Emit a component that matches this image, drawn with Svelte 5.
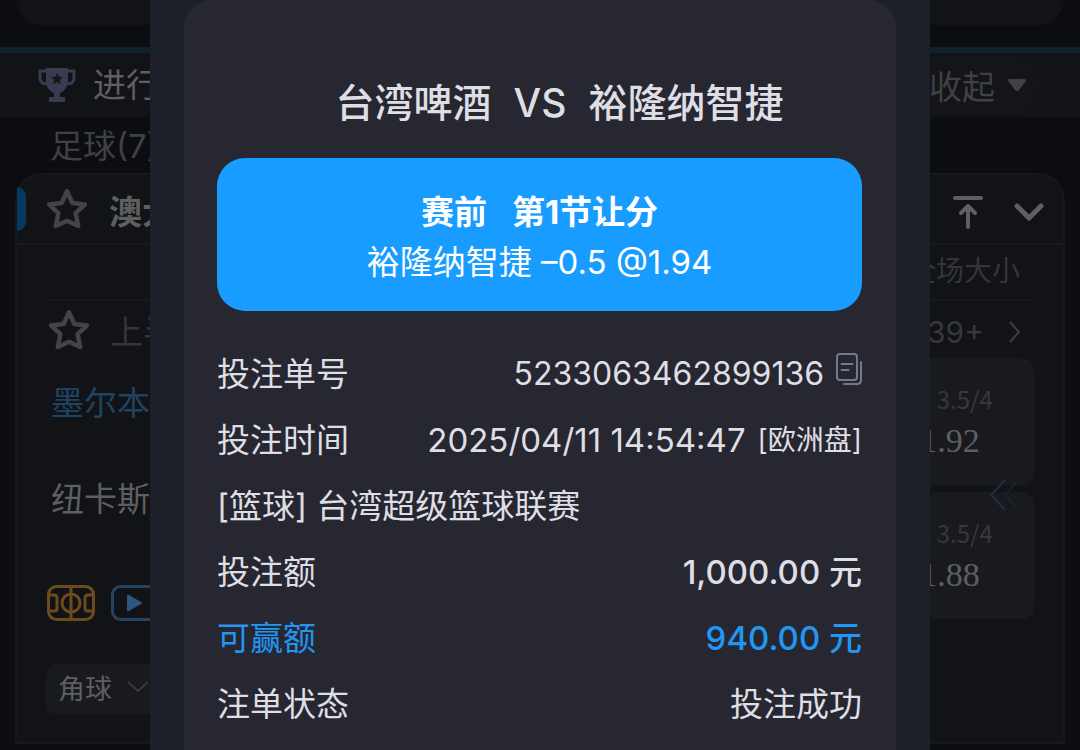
<script>
	const bet = {
		home: '台湾啤酒',
		away: '裕隆纳智捷',
		stage: '赛前',
		market: '第1节让分',
		pick: '裕隆纳智捷 –0.5 @1.94'
	}

	const teams = ['墨尔本', '纽卡斯']

	const odds = [
		{ line: '大 3.5/4', price: '1.92' },
		{ line: '小 3.5/4', price: '1.88' }
	]

	const orderId = '5233063462899136'
	const copy = () => navigator.clipboard?.writeText(orderId)
</script>

{#snippet star()}
	<svg class="star" viewBox="2 2 36 36" aria-hidden="true">
		<path d="M20 4l4.800 10.600 11.400 1.300-8.500 7.800 2.400 11.600L20 30.600 9.900 35.300l2.400-11.600-8.500-7.800 11.400-1.300z" />
	</svg>
{/snippet}

<div class="page">
	<div class="topbar"><div class="topbar-inner"></div></div>

	<header class="section">
		<svg class="trophy" viewBox="0 0 38 38" aria-hidden="true">
			<path d="M9 5H2v7c0 4 3 6 8 6M29 5h7v7c0 4-3 6-8 6" fill="none" stroke="#383c50" stroke-width="3" />
			<path d="M8 2h22v13c0 7-5 11-8 12v4h5v5H11v-5h5v-4c-3-1-8-5-8-12z" fill="#383c50" />
			<path d="M19 7l1.700 3.800 4.300.4-3.200 2.800.9 4.200-3.700-2.200-3.700 2.200.9-4.200-3.200-2.800 4.300-.4z" fill="#15171d" />
		</svg>
		<span class="section-name">进行</span>
		<button class="fold">收起
			<svg width="20" height="14" viewBox="0 0 20 14" aria-hidden="true">
				<path d="M3 1h14q3 0 1.500 2.500L12 12q-2 2-4 0L1.500 3.500Q0 1 3 1z" fill="#404143" />
			</svg>
		</button>
	</header>

	<div class="sport">足球(7)</div>

	<section class="league">
		<div class="league-head">
			<span class="marker"></span>
			{@render star()}
			<h2>澳大</h2>
			<div class="tools">
				<button class="icon" aria-label="置顶">
					<svg width="32" height="34" viewBox="0 0 32 34">
						<path d="M3 3h26M16 32V12M9 18l7-7 7 7" />
					</svg>
				</button>
				<button class="icon" aria-label="展开">
					<svg width="32" height="20" viewBox="0 0 32 20">
						<path d="M4 4l12 12L28 4" stroke-width="5" />
					</svg>
				</button>
			</div>
		</div>

		<div class="league-body">
			<div class="columns">全场大小</div>
			<div class="match-head">
				{@render star()}
				<span class="period">上半</span>
				<a class="more" href="#more">39+
					<svg width="14" height="24" viewBox="0 0 14 24" aria-hidden="true">
						<path d="M2 2l9 10-9 10" fill="none" stroke="#3c3d40" stroke-width="2" />
					</svg>
				</a>
			</div>
			<div class="match">
				<div class="teams">
					{#each teams as team, i}
						<div class="team" class:lead={i === 0}>{team}</div>
					{/each}
					<div class="media">
						<svg width="48" height="36" viewBox="0 0 48 36" fill="none" stroke="#6c4b1c" stroke-width="3" aria-hidden="true">
							<rect x="1.500" y="1.500" width="45" height="33" rx="8" />
							<path d="M24 1v34M2 10h5q3 0 3 3v10q0 3-3 3H2M46 10h-5q-3 0-3 3v10q0 3 3 3h5" />
							<circle cx="24" cy="18" r="9" />
						</svg>
						<svg width="48" height="36" viewBox="0 0 48 36" aria-hidden="true">
							<rect x="1.500" y="1.500" width="45" height="33" rx="8" fill="none" stroke="#234360" stroke-width="3" />
							<path d="M16 11q0-2 2-1l12 7q2 1 0 2l-12 7q-2 1-2-1z" fill="#2c5780" />
						</svg>
					</div>
				</div>
				<div class="odds">
					{#each odds as odd}
						<button class="odd">
							<span class="line">{odd.line}</span>
							<span class="price">{odd.price}</span>
						</button>
					{/each}
					<svg class="swipe" width="30" height="32" viewBox="0 0 30 32" fill="none" stroke-width="2" aria-hidden="true">
						<path d="M16 1L2 16l14 15" stroke="#1b2f47" />
						<path d="M27 4L16 16l11 12" stroke="#182230" />
					</svg>
				</div>
			</div>
			<button class="corner">角球
				<svg width="22" height="12" viewBox="0 0 22 12" aria-hidden="true">
					<path d="M1 1l10 9 10-9" fill="none" stroke="#3a3b3e" stroke-width="2" />
				</svg>
			</button>
		</div>
	</section>
</div>

<div class="modal" role="dialog" aria-modal="true" aria-labelledby="bet-title">
	<div class="sheet">
		<h1 id="bet-title"><span>{bet.home}</span><span>VS</span><span>{bet.away}</span></h1>

		<div class="pick">
			<strong><span>{bet.stage}</span><span>{bet.market}</span></strong>
			<p>{bet.pick}</p>
		</div>

		<dl>
			<div class="row">
				<dt>投注单号</dt>
				<dd class="order">
					{orderId}
					<button class="copy" aria-label="复制" on:click={copy}>
						<svg width="26" height="32" viewBox="0 0 26 32" fill="none" stroke="#777989" stroke-width="2" stroke-linecap="round">
							<rect x="1" y="1" width="20" height="26" rx="3" />
							<path d="M5.500 11h11M5.500 17h7M25 9v18q0 4-4 4H8" />
						</svg>
					</button>
				</dd>
			</div>
			<div class="row">
				<dt>投注时间</dt>
				<dd>2025/04/11 14:54:47 <small>[欧洲盘]</small></dd>
			</div>
			<div class="row">
				<dt>[篮球] 台湾超级篮球联赛</dt>
			</div>
			<div class="row">
				<dt>投注额</dt>
				<dd class="amount">1,000.00 元</dd>
			</div>
			<div class="row win">
				<dt>可赢额</dt>
				<dd class="amount">940.00 元</dd>
			</div>
			<div class="row">
				<dt>注单状态</dt>
				<dd>投注成功</dd>
			</div>
		</dl>
	</div>
</div>

<style>
	:global(body) {
		margin: 0;
		background: #0b0d11;
	}

	.page,
	.modal {
		font-family: Inter, 'Noto Sans CJK SC', sans-serif;
	}

	.page *,
	.modal * {
		box-sizing: border-box;
	}

	button {
		margin: 0;
		padding: 0;
		border: 0;
		background: none;
		color: inherit;
		font: inherit;
		cursor: pointer;
	}

	svg {
		flex: none;
	}

	.page {
		height: 100vh;
		overflow: hidden;
		background: #0b0d11;
		color: #5e5f61;
		font-size: 33px;
	}

	.topbar {
		height: 53px;
		padding: 0 16px;
		border-bottom: 6px solid #0f212f;
	}

	.topbar-inner {
		height: 25px;
		border-radius: 0 0 28px 28px;
		background: #111316;
	}

	.section {
		display: flex;
		align-items: center;
		height: 64px;
		padding: 0 40px 0 38px;
		background: #111316;
	}

	.section-name {
		padding-bottom: 4px;
	}

	.trophy {
		width: 38px;
		height: 38px;
		margin-right: 17px;
	}

	.fold {
		display: flex;
		align-items: center;
		gap: 12px;
		height: 58px;
		margin-left: auto;
		padding: 0 13px 0 32px;
		border-radius: 29px;
		background: #131518;
		color: #404144;
	}

	.sport {
		height: 56px;
		padding-left: 50px;
		line-height: 58px;
		color: #404144;
	}

	.league {
		margin: 0 15px;
		border: 2px solid #16181b;
		border-radius: 28px 28px 0 0;
		background: #111316;
	}

	.league-head {
		display: flex;
		align-items: center;
		height: 70px;
		padding-right: 18px;
		border-bottom: 2px solid #17191c;
	}

	.marker {
		width: 9px;
		height: 44px;
		margin-right: 21px;
		border-radius: 0 10px 10px 0;
		background: #07385f;
	}

	.star {
		width: 40px;
		height: 40px;
		fill: none;
		stroke: #434447;
		stroke-width: 4;
		stroke-linejoin: round;
	}

	h2 {
		margin: 0 0 0 22px;
		padding-top: 2px;
		font-size: 33px;
		font-weight: 700;
	}

	.tools {
		display: flex;
		align-items: center;
		gap: 29px;
		margin-left: auto;
		padding-top: 6px;
	}

	.icon {
		display: flex;
	}

	.icon svg {
		fill: none;
		stroke: #5e5f61;
		stroke-width: 4;
		stroke-linecap: round;
		stroke-linejoin: round;
	}

	.league-body {
		padding: 0 29px 28px;
	}

	.columns {
		height: 56px;
		padding-right: 14px;
		border-bottom: 2px solid #17191c;
		font-size: 28px;
		line-height: 52px;
		text-align: right;
		color: #343538;
	}

	.match-head {
		display: flex;
		align-items: center;
		height: 57px;
		padding: 0 12px 0 3px;
	}

	.period {
		margin-left: 21px;
		color: #343538;
	}

	.more {
		display: flex;
		align-items: center;
		gap: 24px;
		margin-left: auto;
		padding-top: 4px;
		color: #37383b;
		font-size: 30px;
		text-decoration: none;
	}

	.match {
		display: flex;
		justify-content: space-between;
	}

	.team {
		height: 96px;
		padding-left: 5px;
		line-height: 90px;
	}

	.lead {
		color: #1f4362;
	}

	.media {
		display: flex;
		gap: 16px;
		margin-top: 35px;
		padding-left: 1px;
	}

	.odds {
		position: relative;
		display: flex;
		flex-direction: column;
		gap: 7px;
		width: 168px;
	}

	.odd {
		display: flex;
		flex-direction: column;
		align-items: center;
		padding: 20px 0 23px;
		border-radius: 12px;
		background: #191a1d;
		line-height: 42px;
	}

	.line {
		color: #37383b;
		font-family: 'Noto Sans CJK SC', sans-serif;
		font-size: 24px;
	}

	.price {
		font-family: 'Liberation Serif', serif;
		font-size: 34px;
	}

	.swipe {
		position: absolute;
		right: 15px;
		top: 121px;
	}

	.corner {
		display: flex;
		align-items: center;
		gap: 15px;
		height: 50px;
		margin-top: 43px;
		padding: 0 12px 4px;
		border-radius: 10px;
		background: #191a1d;
		font-size: 27px;
	}

	.modal {
		position: fixed;
		inset: 0 150px;
		padding: 0 34px;
		overflow: hidden;
		background: #1e2029;
		color: #dedee4;
		font-size: 33px;
	}

	.sheet {
		min-height: 100%;
		padding: 76px 34px 0 33px;
		border-radius: 28px 28px 0 0;
		background: #272731;
	}

	h1 {
		display: flex;
		justify-content: center;
		gap: 22px;
		margin: 0 0 28px 40px;
		font-size: 39px;
		font-weight: 500;
		line-height: 54px;
	}

	.pick {
		padding: 29px 0 24px;
		border-radius: 28px;
		background: #199cff;
		color: #fff;
		line-height: 50px;
		text-align: center;
	}

	.pick strong {
		display: flex;
		justify-content: center;
		gap: 25px;
	}

	.pick p {
		margin: 0;
	}

	dl {
		margin: 30px 0 0;
	}

	.row {
		display: flex;
		justify-content: space-between;
		height: 66px;
		line-height: 66px;
		white-space: nowrap;
	}

	dd {
		display: flex;
		align-items: center;
		gap: 12px;
		margin: 0;
	}

	small {
		font-size: 28px;
	}

	.order {
		font-size: 32px;
	}

	.amount {
		font-weight: 500;
	}

	.copy {
		display: flex;
		padding-bottom: 10px;
	}

	.win {
		color: #2196f3;
	}
</style>
